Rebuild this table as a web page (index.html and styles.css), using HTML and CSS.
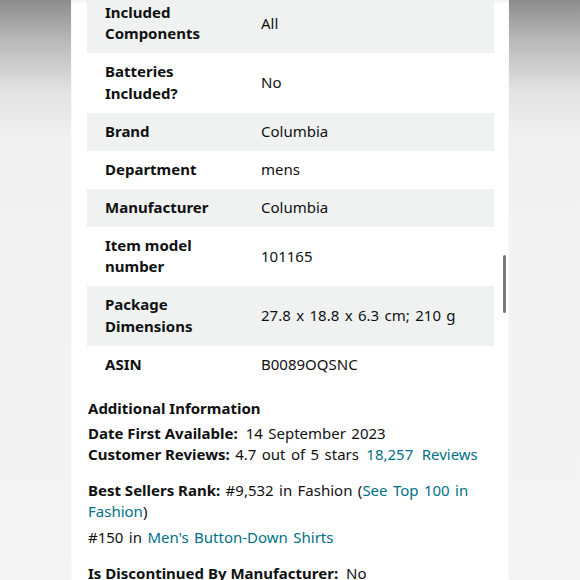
FILE: index.html
```html
<!DOCTYPE html>
<html lang="en">
<head>
<meta charset="utf-8">
<title>Product details</title>
<link rel="stylesheet" href="styles.css">
</head>
<body>
<div class="screen">
  <main class="panel">
    <div class="specs">
      <div class="row shade"><div class="label">Included Components</div><div class="value">All</div></div>
      <div class="row"><div class="label">Batteries Included?</div><div class="value">No</div></div>
      <div class="row shade"><div class="label">Brand</div><div class="value">Columbia</div></div>
      <div class="row"><div class="label">Department</div><div class="value">mens</div></div>
      <div class="row shade"><div class="label">Manufacturer</div><div class="value">Columbia</div></div>
      <div class="row"><div class="label">Item model number</div><div class="value">101165</div></div>
      <div class="row shade"><div class="label">Package Dimensions</div><div class="value">27.8 x 18.8 x 6.3 cm; 210 g</div></div>
      <div class="row"><div class="label">ASIN</div><div class="value">B0089OQSNC</div></div>
    </div>

    <section class="info">
      <h2 class="heading">Additional Information</h2>
      <div class="group">
        <p class="line"><b class="key wide">Date First Available:</b>14 September 2023</p>
        <p class="line"><b class="key">Customer Reviews:</b> 4.7 out of 5 stars <a class="link gapl" href="#">18,257</a> <a class="link gapr" href="#">Reviews</a></p>
      </div>
      <div class="group">
        <p class="line"><b class="key">Best Sellers Rank:</b> #9,532 in Fashion (<a class="link" href="#">See Top 100 in Fashion</a>)</p>
        <p class="line sub">#150 in <a class="link" href="#">Men's Button-Down Shirts</a></p>
      </div>
      <div class="group">
        <p class="line"><b class="key wide">Is Discontinued By Manufacturer:</b>No</p>
      </div>
    </section>

    <div class="scrollbar"></div>
  </main>
</div>
</body>
</html>
```

FILE: styles.css
```css
* { box-sizing: border-box; }

html, body {
  margin: 0;
  padding: 0;
  height: 100%;
}

body {
  background: linear-gradient(to bottom, #8c8c8c 0px, #b8b8b8 40px, #e2e2e2 90px, #f1f1f1 140px, #f4f4f4 580px);
  font-family: "Noto Sans", "Open Sans", sans-serif;
  color: #0f1111;
  overflow: hidden;
}

.screen {
  display: flex;
  justify-content: center;
  height: 580px;
}

.panel {
  position: relative;
  width: 438px;
  height: 580px;
  background: #ffffff;
  padding: 0 15px 0 16px;
  overflow: hidden;
  box-shadow: 0 2px 3px rgba(0, 0, 0, 0.06) inset;
}

.specs {
  margin-top: -6.5px;
}

.row {
  display: grid;
  grid-template-columns: 156px 1fr;
  align-items: center;
  padding: 8.25px 18px;
  font-size: 15px;
  line-height: 21.5px;
}

.row.shade {
  background: #f0f2f2;
}

.label {
  font-weight: 700;
  padding-right: 24px;
}

.value {
  word-spacing: 1.5px;
}

.info {
  padding: 14px 1px 0;
  font-size: 15px;
  line-height: 21px;
}

.heading {
  margin: 0 0 4px;
  font-size: 15px;
  font-weight: 700;
  line-height: 21px;
}

.group {
  margin-bottom: 15px;
}

.line {
  margin: 0;
  word-spacing: 1.5px;
}

.line.sub {
  margin-top: 5px;
}

.key {
  font-weight: 700;
  word-spacing: 0;
}

.key.wide {
  margin-right: 8px;
}

.link {
  color: #007185;
  text-decoration: none;
}

.link.gapl {
  margin-left: 2px;
}

.link.gapr {
  margin-left: 3px;
}

.scrollbar {
  position: absolute;
  left: 432px;
  top: 255px;
  width: 3px;
  height: 58px;
  border-radius: 2px;
  background: #7a7a7a;
}
```
